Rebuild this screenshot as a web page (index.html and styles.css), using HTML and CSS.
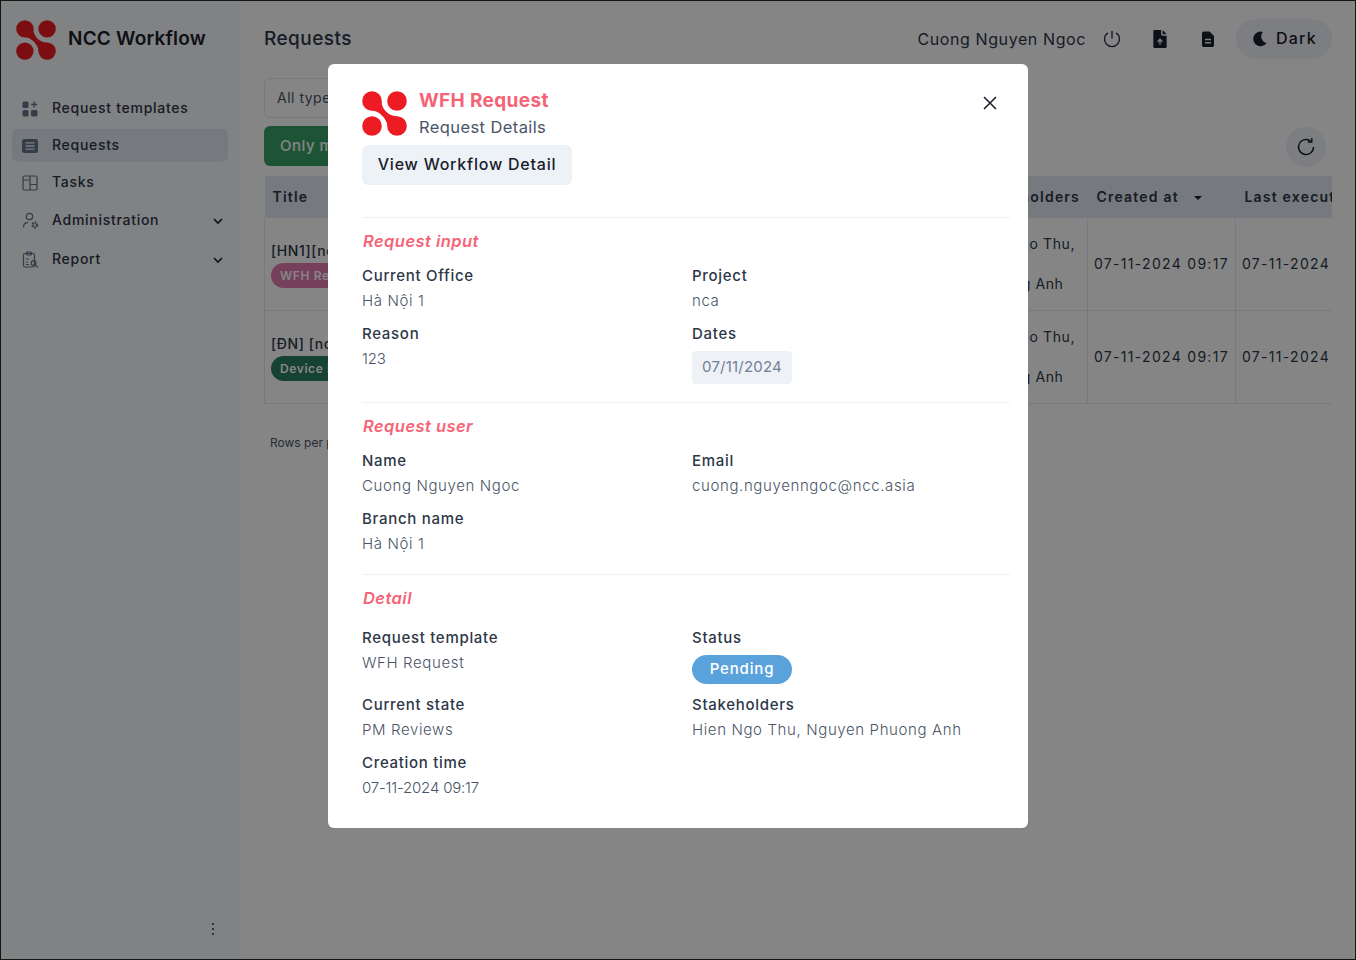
FILE: index.html
```html
<!DOCTYPE html>
<html lang="en">
<head>
  <meta charset="UTF-8">
  <meta name="viewport" content="width=device-width, initial-scale=1.0">
  <title>NCC Workflow</title>
  <link rel="stylesheet" href="styles.css">
</head>
<body>
  <div class="app">
    <aside class="sidebar">
      <div class="brand">
        <svg class="logo-small" viewBox="0 0 45 45"><circle cx="10" cy="10" r="9.800"/><circle cx="35" cy="10" r="9.800"/><circle cx="10" cy="35" r="9.800"/><circle cx="35" cy="35" r="9.800"/><path d="M19.500 10C19.500 17 25 24.500 35 25.500L35 35 25.500 35C25 28 17 19.500 10 19.500L10 10Z"/></svg>
        <span class="brand-name">NCC Workflow</span>
      </div>
      <nav class="nav">
        <a class="nav-item">
          <svg class="nav-icon" viewBox="0 0 16 16"><rect x="0.500" y="0.500" width="6" height="6.500" rx="1.500"/><rect x="0.500" y="9" width="6" height="6.500" rx="1.500"/><rect x="9" y="9" width="6.500" height="6.500" rx="1.500"/><path d="M12.200 0.500v6M9.200 3.500h6" fill="none" stroke="currentColor" stroke-width="1.300"/></svg>
          <span>Request templates</span>
        </a>
        <a class="nav-item active">
          <svg class="nav-icon" viewBox="0 0 16 16"><rect x="0" y="1" width="16" height="14" rx="2.500"/><path d="M3.500 4.800h9M3.500 8h9M3.500 11.200h9" stroke="#edf2f7" stroke-width="1.300"/></svg>
          <span>Requests</span>
        </a>
        <a class="nav-item">
          <svg class="nav-icon outline" viewBox="0 0 16 16"><rect x="1" y="1" width="14" height="14" rx="1.500"/><path d="M1 5h7M8 1v14M8 9.500h7"/></svg>
          <span>Tasks</span>
        </a>
        <a class="nav-item tall">
          <svg class="nav-icon outline wide" viewBox="0 0 18 18"><circle cx="7.500" cy="4.500" r="3.200"/><path d="M1.500 15.500c0-3 1.500-5 4.500-5.200"/><circle cx="12.800" cy="13" r="2.200" stroke-width="2.400" stroke-dasharray="1.500 0.800"/></svg>
          <span>Administration</span>
          <svg class="chevron" viewBox="0 0 12 12"><path d="M2 4l4 4 4-4"/></svg>
        </a>
        <a class="nav-item tall">
          <svg class="nav-icon outline wide" viewBox="0 0 18 18"><rect x="1.500" y="2.500" width="11" height="13.500" rx="1.500"/><rect x="4.500" y="1" width="5" height="3" rx="1"/><path d="M4 8h3M4 11h2M4 13.500h3"/><circle cx="11.500" cy="12" r="2.300"/><path d="M13.300 13.800l2.700 2.700"/></svg>
          <span>Report</span>
          <svg class="chevron" viewBox="0 0 12 12"><path d="M2 4l4 4 4-4"/></svg>
        </a>
      </nav>
      <div class="sidebar-foot">
        <svg class="kebab" viewBox="0 0 4 14"><circle cx="2" cy="2" r="1"/><circle cx="2" cy="7" r="1"/><circle cx="2" cy="12" r="1"/></svg>
      </div>
    </aside>

    <main class="main">
      <header class="topbar">
        <h2 class="page-title">Requests</h2>
        <div class="topbar-right">
          <span class="user-name">Cuong Nguyen Ngoc</span>
          <svg class="top-icon outline-dark" viewBox="0 0 18 18"><path d="M9 1v7.500"/><path d="M5 2.800a7.500 7.500 0 1 0 8 0"/></svg>
          <svg class="top-icon big" viewBox="0 0 18 18"><path d="M3 2.200C3 1.500 3.500 1 4.200 1H10v3.500c0 .8.700 1.500 1.500 1.500H15v10c0 .7-.5 1.200-1.200 1.200H4.200C3.500 17.200 3 16.700 3 16Z"/><path d="M11.300 1l3.700 3.700h-3.700Z"/><path d="M9 14v-4.500M6.800 11.500 9 9.300l2.200 2.200" fill="none" stroke="#edf2f7" stroke-width="1.300"/></svg>
          <svg class="top-icon last" viewBox="0 0 18 18"><path d="M5 1.500h5.500L15 6v9.200c0 1-.8 1.800-1.800 1.800H4.800c-1 0-1.800-.8-1.800-1.800V3.500c0-1.100.9-2 2-2Z"/><path d="M6 9.500h6M6 12.700h6" stroke="#edf2f7" stroke-width="1.600"/></svg>
          <button class="theme-btn">
            <svg class="moon" viewBox="0 0 16 16"><path d="M11.500 0.500A7.800 7.800 0 1 0 15.500 12.500 7.500 7.500 0 0 1 11.500 0.500Z"/></svg>
            <span>Dark</span>
          </button>
        </div>
      </header>

      <div class="filter-row">
        <div class="select-box">All types</div>
      </div>
      <div class="action-row">
        <button class="green-btn">Only my requests</button>
        <button class="refresh-btn">
          <svg viewBox="0 0 20 20"><path d="M17.500 10a7.500 7.500 0 1 1-2.200-5.300"/><path d="M15.800 1v4h-4" /></svg>
        </button>
      </div>

      <div class="table-wrap">
        <table class="req-table">
          <colgroup>
            <col class="col-title"><col class="col-state"><col class="col-people"><col class="col-date"><col class="col-date">
          </colgroup>
          <thead>
            <tr>
              <th class="th-title">Title</th>
              <th>State</th>
              <th class="th-people">Stakeholders</th>
              <th>Created at <svg class="sort" viewBox="0 0 8 4"><path d="M0 0h8L4 4Z"/></svg></th>
              <th>Last execution</th>
            </tr>
          </thead>
          <tbody>
            <tr>
              <td class="td-title">
                <div class="row-title">[HN1][nca] WFH Request</div>
                <span class="tag tag-pink">WFH Request</span>
              </td>
              <td>PM Reviews</td>
              <td class="td-people"><div class="person-a">Hien Ngo Thu,</div><div class="person-gap"></div><div class="person-b">Nguyen Phuong Anh</div></td>
              <td class="td-date">07-11-2024 09:17</td>
              <td class="td-date">07-11-2024 09:17</td>
            </tr>
            <tr>
              <td class="td-title">
                <div class="row-title">[ĐN] [nca] Device Request</div>
                <span class="tag tag-green">Device Request</span>
              </td>
              <td>PM Reviews</td>
              <td class="td-people"><div class="person-a">Hien Ngo Thu,</div><div class="person-gap"></div><div class="person-b">Nguyen Phuong Anh</div></td>
              <td class="td-date">07-11-2024 09:17</td>
              <td class="td-date">07-11-2024 09:17</td>
            </tr>
          </tbody>
        </table>
      </div>
      <div class="pager">Rows per page</div>
    </main>
  </div>

  <div class="overlay">
    <section class="modal">
      <button class="close-btn">
        <svg viewBox="0 0 14 14"><path d="M1 1l12 12M13 1L1 13"/></svg>
      </button>
      <div class="modal-head">
        <svg class="logo-big" viewBox="0 0 45 45"><circle cx="10" cy="10" r="9.800"/><circle cx="35" cy="10" r="9.800"/><circle cx="10" cy="35" r="9.800"/><circle cx="35" cy="35" r="9.800"/><path d="M19.500 10C19.500 17 25 24.500 35 25.500L35 35 25.500 35C25 28 17 19.500 10 19.500L10 10Z"/></svg>
        <div>
          <div class="modal-title">WFH Request</div>
          <div class="modal-sub">Request Details</div>
        </div>
      </div>
      <button class="view-btn">View Workflow Detail</button>

      <div class="section first">
        <h3 class="section-title">Request input</h3>
        <div class="field-grid">
          <div class="field"><div class="label">Current Office</div><div class="value">Hà Nội 1</div></div>
          <div class="field"><div class="label">Project</div><div class="value">nca</div></div>
          <div class="field"><div class="label">Reason</div><div class="value num">123</div></div>
          <div class="field"><div class="label">Dates</div><span class="date-chip">07/11/2024</span></div>
        </div>
      </div>

      <div class="section">
        <h3 class="section-title">Request user</h3>
        <div class="field-grid">
          <div class="field"><div class="label">Name</div><div class="value">Cuong Nguyen Ngoc</div></div>
          <div class="field"><div class="label">Email</div><div class="value">cuong.nguyenngoc@ncc.asia</div></div>
          <div class="field"><div class="label">Branch name</div><div class="value">Hà Nội 1</div></div>
        </div>
      </div>

      <div class="section detail">
        <h3 class="section-title">Detail</h3>
        <div class="field-grid">
          <div class="field"><div class="label">Request template</div><div class="value">WFH Request</div></div>
          <div class="field"><div class="label">Status</div><span class="status-pill">Pending</span></div>
          <div class="field"><div class="label">Current state</div><div class="value">PM Reviews</div></div>
          <div class="field"><div class="label">Stakeholders</div><div class="value">Hien Ngo Thu, Nguyen Phuong Anh</div></div>
          <div class="field"><div class="label">Creation time</div><div class="value num">07-11-2024 09:17</div></div>
        </div>
      </div>
    </section>
  </div>
</body>
</html>
```

FILE: styles.css
```css
* {
  box-sizing: border-box;
}
body {
  margin: 0;
  font-family: Inter, "Noto Sans", sans-serif;
  color: #1a202c;
  background: #fff;
}
h2, h3 {
  margin: 0;
}
button {
  font-family: inherit;
  border: none;
  cursor: pointer;
}
.app {
  display: flex;
  height: 960px;
  border: 1px solid #2a2a2a;
  overflow: hidden;
}

/* sidebar */
.sidebar {
  width: 239px;
  flex-shrink: 0;
  padding: 19px 12px 0 11px;
  background: #f7f9fb;
  display: flex;
  flex-direction: column;
}
.brand {
  display: flex;
  align-items: center;
  gap: 12px;
  padding-left: 4px;
  height: 40px;
}
.logo-small {
  width: 40px;
  height: 40px;
  fill: #ed1c24;
}
.brand-name {
  padding-bottom: 3px;
  font-size: 19px;
  font-weight: 600;
  letter-spacing: 0.2px;
}
.nav {
  margin-top: 32px;
  display: flex;
  flex-direction: column;
  gap: 4px;
}
.nav-item {
  height: 33px;
  display: flex;
  align-items: center;
  padding-left: 10px;
  border-radius: 6px;
  font-size: 14px;
  font-weight: 500;
  letter-spacing: 0.72px;
  color: #2d3748;
}
.nav-item span {
  margin-left: 14px;
  padding-bottom: 2px;
}
.nav-item.tall {
  height: 35px;
}
.nav-item.active {
  background: #e2e8f0;
}
.nav-icon {
  width: 16px;
  height: 16px;
  flex-shrink: 0;
  fill: #64748b;
  color: #64748b;
}
.nav-icon.outline {
  fill: none;
  stroke: #64748b;
  stroke-width: 1.200;
}
.nav-icon.wide {
  width: 18px;
  height: 18px;
  margin-right: -2px;
}
.chevron {
  width: 12px;
  height: 12px;
  margin-left: auto;
  margin-right: 4px;
  fill: none;
  stroke: #1a202c;
  stroke-width: 1.600;
}
.sidebar-foot {
  margin-top: auto;
  padding: 0 0 23px 199px;
}
.kebab {
  display: block;
  width: 4px;
  height: 14px;
  fill: #2d3748;
}

/* main */
.main {
  flex: 1;
  min-width: 0;
  padding: 0 23px 0 24px;
  background: #fff;
}
.topbar {
  height: 77px;
  display: flex;
  align-items: center;
  justify-content: space-between;
  padding-bottom: 2px;
}
.page-title {
  font-size: 19px;
  font-weight: 500;
  letter-spacing: 0.45px;
  color: #2d3748;
}
.topbar-right {
  display: flex;
  align-items: center;
}
.user-name {
  font-size: 16px;
  font-weight: 400;
  letter-spacing: 0.6px;
  color: #2d3748;
  margin-right: 17px;
}
.top-icon {
  width: 18px;
  height: 18px;
  margin-right: 30px;
  fill: #1a202c;
}
.top-icon.big {
  width: 20px;
  height: 20px;
  margin-left: -1px;
  margin-right: 29px;
}
.top-icon.last {
  margin-right: 19px;
}
.top-icon.outline-dark {
  fill: none;
  stroke: #2d3748;
  stroke-width: 1.400;
}
.theme-btn {
  width: 96px;
  height: 40px;
  border-radius: 20px;
  background: #edf2f7;
  display: flex;
  align-items: center;
  gap: 9px;
  padding: 0 0 0 16px;
  font-size: 16px;
  font-weight: 500;
  letter-spacing: 1.2px;
  color: #1a202c;
}
.theme-btn span {
  padding-bottom: 2px;
}
.moon {
  width: 15px;
  height: 16px;
  fill: #1a202c;
}
.filter-row {
  height: 48px;
}
.select-box {
  width: 200px;
  height: 40px;
  border: 1px solid #e2e8f0;
  border-radius: 6px;
  padding: 10px 12px;
  font-size: 14px;
  letter-spacing: 0.5px;
  color: #4a5568;
}
.action-row {
  display: flex;
  justify-content: space-between;
  height: 50px;
  padding-right: 6px;
}
.green-btn {
  height: 40px;
  padding: 0 16px 2px 16px;
  border-radius: 6px;
  background: #38a169;
  color: #fff;
  font-size: 15px;
  font-weight: 500;
  letter-spacing: 0.5px;
}
.refresh-btn {
  width: 40px;
  height: 40px;
  margin-top: 1px;
  border-radius: 50%;
  background: #edf2f7;
  display: flex;
  align-items: center;
  justify-content: center;
  padding: 0;
}
.refresh-btn svg {
  width: 20px;
  height: 20px;
  fill: none;
  stroke: #1a202c;
  stroke-width: 1.400;
}

/* table */
.table-wrap {
  overflow: hidden;
  width: 1068px;
}
.req-table {
  table-layout: fixed;
  width: 1120px;
  border-collapse: collapse;
  font-size: 14px;
  letter-spacing: 0.6px;
  color: #2d3748;
}
.col-title { width: 420px; }
.col-state { width: 203px; }
.col-people { width: 200px; }
.col-date { width: 148px; }
.req-table th {
  height: 41px;
  background: #e2e8f0;
  text-align: left;
  padding: 0 8px 0 9px;
  font-weight: 600;
  letter-spacing: 1.2px;
  white-space: nowrap;
}
.req-table .th-title {
  padding-left: 8px;
}
.req-table td {
  height: 93px;
  padding: 0 6px;
  border: 1px solid #e2e8f0;
  white-space: nowrap;
}
.req-table .td-title {
  padding-top: 2px;
}
.req-table .td-date {
  letter-spacing: 1.3px;
  font-weight: 400;
}
.req-table .td-people {
  line-height: 20px;
  padding: 0;
}
.req-table .th-people {
  padding-left: 89px;
}
.person-a {
  margin-left: 84px;
}
.person-gap {
  height: 20px;
}
.person-b {
  margin-left: 29px;
}
.sort {
  width: 8px;
  height: 4px;
  margin-left: 10px;
  vertical-align: middle;
  fill: #1a202c;
}
.row-title {
  font-weight: 500;
  margin-bottom: 4px;
}
.tag {
  display: inline-block;
  height: 25px;
  line-height: 25px;
  padding: 0 9px;
  border-radius: 13px;
  font-size: 12px;
  font-weight: 600;
  color: #fff;
}
.tag-pink {
  background: #e27ab0;
}
.tag-green {
  background: #2a7f63;
}
.pager {
  margin-top: 31px;
  padding-left: 6px;
  font-size: 12px;
  color: #4a5568;
}

/* modal */
.overlay {
  position: fixed;
  inset: 0;
  background: rgba(0, 0, 0, 0.48);
  display: flex;
  justify-content: center;
  align-items: flex-start;
  padding-top: 64px;
}
.modal {
  position: relative;
  width: 700px;
  height: 764px;
  background: #fff;
  border-radius: 6px;
  padding: 27px 18px 28px 34px;
}
.close-btn {
  position: absolute;
  top: 32px;
  right: 31px;
  width: 14px;
  height: 14px;
  padding: 0;
  background: none;
}
.close-btn svg {
  display: block;
  width: 14px;
  height: 14px;
  fill: none;
  stroke: #1a202c;
  stroke-width: 1.600;
}
.modal-head {
  display: flex;
  gap: 12px;
  height: 45px;
}
.logo-big {
  width: 45px;
  height: 45px;
  fill: #ed1c24;
}
.modal-title {
  font-size: 19px;
  font-weight: 700;
  line-height: 20px;
  letter-spacing: 0.35px;
  color: #f56476;
}
.modal-sub {
  margin-top: 6px;
  font-size: 16.500px;
  line-height: 20px;
  letter-spacing: 0.4px;
  color: #4a5568;
}
.view-btn {
  display: block;
  margin-top: 9px;
  width: 210px;
  height: 40px;
  padding: 0 0 2px 0;
  border-radius: 6px;
  background: #edf2f7;
  font-size: 16px;
  font-weight: 500;
  letter-spacing: 0.78px;
  color: #1a202c;
}
.section {
  border-top: 1px solid #edf2f7;
  padding: 11px 0 18px 0;
}
.section.first {
  margin-top: 32px;
}
.section-title {
  font-size: 16.500px;
  font-weight: 600;
  font-style: italic;
  line-height: 24px;
  letter-spacing: 0.45px;
  color: #f56476;
  margin: 0 0 10px 1px;
}
.detail .section-title {
  margin-bottom: 15px;
}
.field-grid {
  display: grid;
  grid-template-columns: 330px 1fr;
  row-gap: 8px;
}
.label {
  font-size: 15px;
  font-weight: 500;
  line-height: 25px;
  letter-spacing: 0.7px;
  color: #2d3748;
}
.value {
  font-size: 15px;
  font-weight: 300;
  line-height: 25px;
  letter-spacing: 0.62px;
  color: #4a5568;
}
.value.num {
  letter-spacing: -0.2px;
}
.date-chip {
  display: block;
  margin-top: 5px;
  width: 100px;
  height: 33px;
  line-height: 32px;
  text-align: center;
  border-radius: 4px;
  background: #eef2f6;
  font-size: 15px;
  letter-spacing: 0.2px;
  color: #718096;
}
.status-pill {
  display: block;
  margin-top: 5px;
  width: 100px;
  height: 29px;
  line-height: 28px;
  text-align: center;
  border-radius: 15px;
  background: #5aa2dc;
  font-size: 15px;
  font-weight: 500;
  letter-spacing: 0.85px;
  color: #fff;
}
```
